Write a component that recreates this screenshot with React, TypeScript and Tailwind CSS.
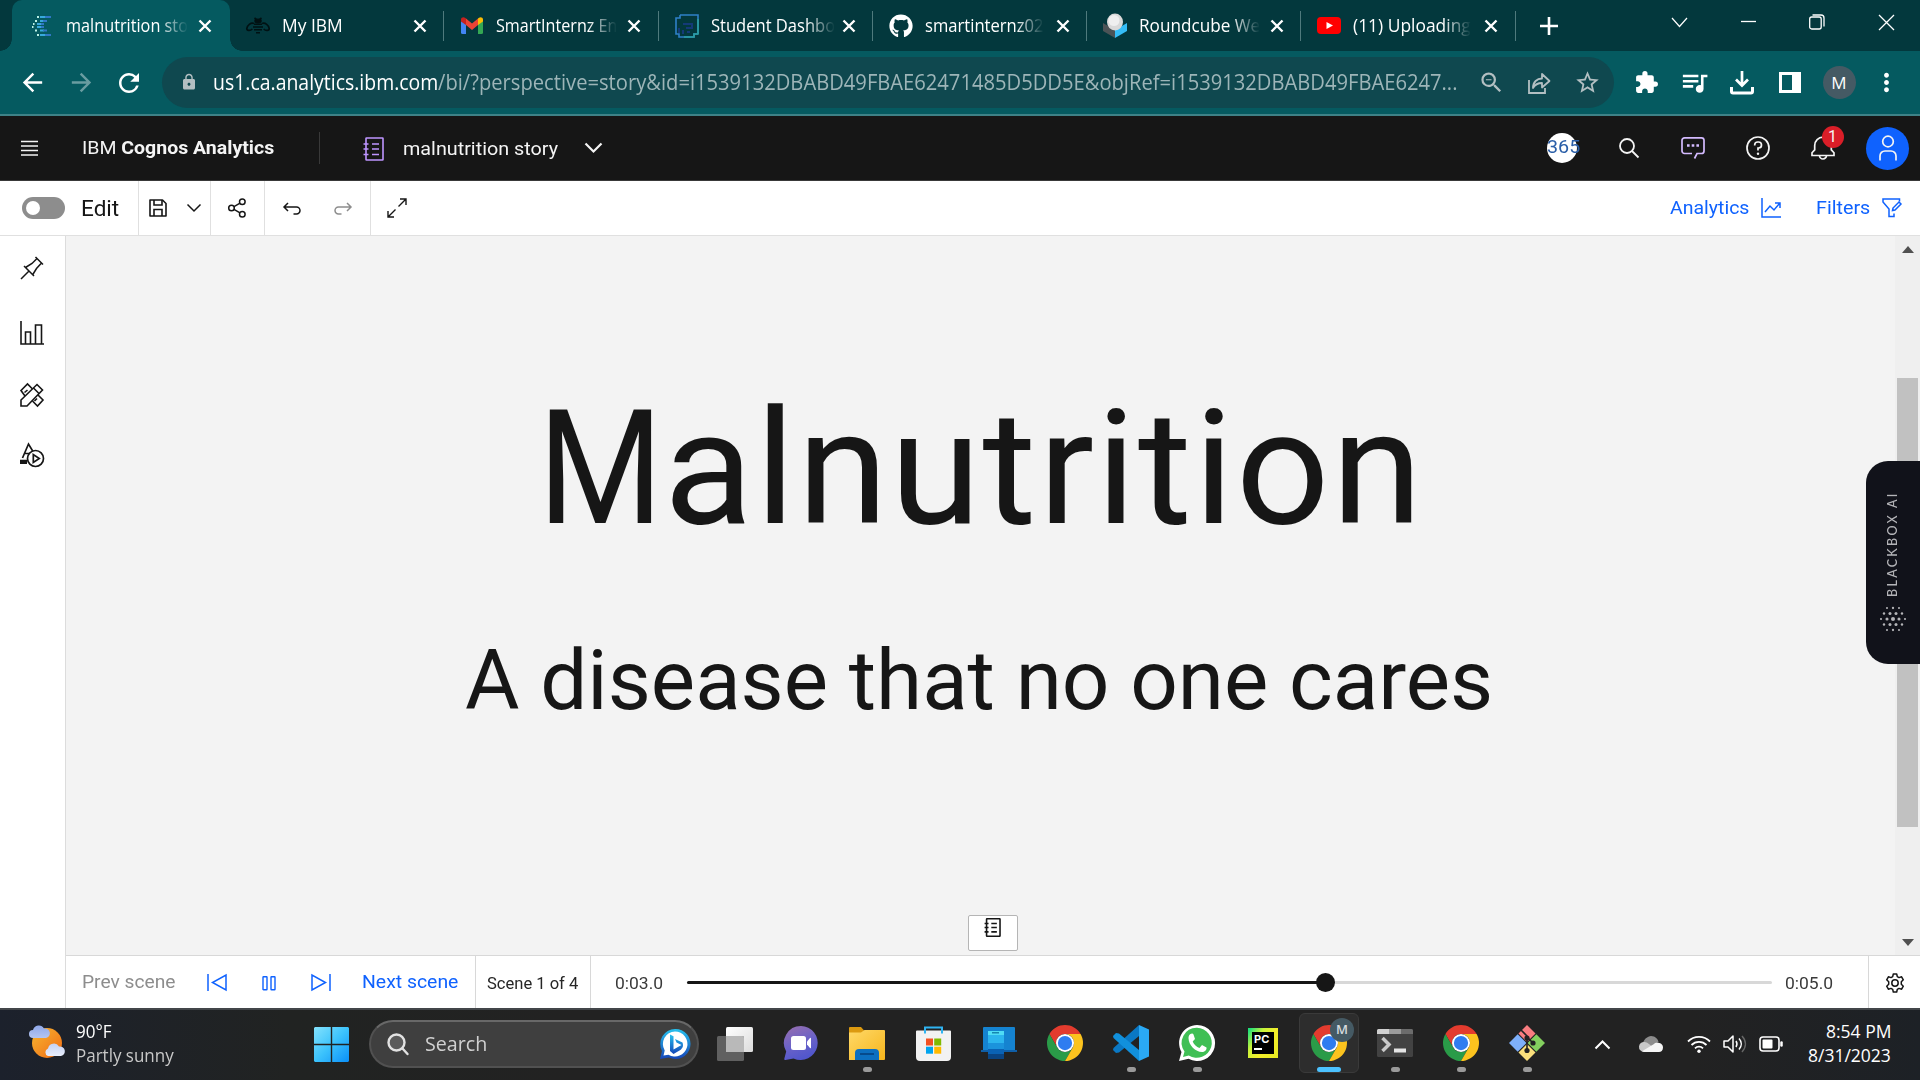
import { useLayoutEffect, useRef, useState, type ReactNode } from "react";
import { MdArrowBack, MdArrowForward, MdRefresh, MdLock, MdZoomOut, MdStarBorder, MdExtension, MdQueueMusic, MdMoreVert } from "react-icons/md";
import { FaGithub } from "react-icons/fa";

/** Single-line label that is condensed or expanded to fill its box exactly. */
function Label({ className = "", children }: { className?: string; children: ReactNode }) {
  const box = useRef<HTMLSpanElement>(null);
  const text = useRef<HTMLSpanElement>(null);
  const [scale, setScale] = useState(1);
  useLayoutEffect(() => {
    if (box.current && text.current) setScale(box.current.clientWidth / text.current.offsetWidth);
  }, []);
  return (
    <span ref={box} className={"block shrink-0 whitespace-nowrap " + className}>
      <span ref={text} className="inline-block origin-left" style={{ transform: `scaleX(${scale})` }}>
        {children}
      </span>
    </span>
  );
}

type SvgProps = { w?: number; h?: number; vb?: string; sw?: number; className?: string; children: ReactNode };
function Icon({ w = 20, h, vb, sw = 1.5, className = "", children }: SvgProps) {
  const hh = h ?? w;
  return (
    <svg width={w} height={hh} viewBox={vb ?? `0 0 ${w} ${hh}`} fill="none" stroke="currentColor" strokeWidth={sw} className={"shrink-0 overflow-visible " + className}>
      {children}
    </svg>
  );
}

function Cell({ className = "", children }: { className?: string; children?: ReactNode }) {
  return <div className={"flex shrink-0 items-center justify-center " + className}>{children}</div>;
}

/* ---------- Browser chrome ---------- */

function CloseX() {
  return (
    <Icon w={12} sw={2.4}><path d="M.5 .5l11 11M11.5 .5L.5 11.5" /></Icon>
  );
}

const cognosFav = (
  <Icon w={19} h={20} sw={1.8}>
    <g stroke="#38a9dc"><path d="M8 1h6M8 5h4M5 8h5M5 11h4M8 14.500h4M8 19h5" /></g>
    <path stroke="#2f78c4" d="M13 1h6M11 5h4M9 8h3M9 11h3M11 14.500h4M13 19h6" />
    <path stroke="#b9efe4" d="M5 1h2M3 5h2M1 8h1.500M0 11h1.500M3 14.500h2M5 19h2" />
  </Icon>
);
const beeFav = (
  <Icon w={24} h={16} sw={1.6}>
    <g stroke="#011113">
      <ellipse cx="12" cy="3" rx="3" ry="1.600" fill="#011113" />
      <path d="M8.500 0l2 1.500M15.500 0l-2 1.500M8 6.300h8M7 9h10M8 11.700h8M10 14.700h4" />
      <path strokeWidth="1.700" d="M8 5.500C5 4 1 7.500 .800 10.500c0 2.500 3.500 2.500 5.500.5M16 5.500c3-1.500 7 2 7.200 5 0 2.500-3.500 2.500-5.500.5" />
    </g>
  </Icon>
);
const gmailFav = (
  <Icon w={22} h={17} className="stroke-none">
    <path fill="#4285f4" d="M0 4v11.500A1.500 1.500 0 0 0 1.500 17H5V7z" />
    <path fill="#34a853" d="M22 4v11.500A1.500 1.500 0 0 1 20.500 17H17V7z" />
    <path fill="#ea4335" d="M5 1.500l6 5 6-5V8l-6 5L5 8z" />
    <path fill="#c5221f" d="M0 2.500C0 .3 2.500-.5 4 .7l1 .8V8L0 4.500z" />
    <path fill="#fbbc04" d="M22 2.500C22 .3 19.500-.5 18 .7l-1 .8V8l5-3.500z" />
  </Icon>
);
const studentFav = (
  <Icon w={24} h={24} sw={1.6}>
    <path stroke="#2f80c8" d="M5 1h18v19M5 1v3H1v16h3v3h15v-3h4" />
    <path stroke="#2aa0a0" d="M23 5v15h-4v3H9" />
    <path stroke="#143a78" strokeWidth="2" d="M8 10h9v4h-6M4 14v5M8 16v4M12 18h3" />
  </Icon>
);
const cubeFav = (
  <Icon w={24} h={24} className="stroke-none">
    <path fill="#4b5356" d="M0 9l12 7v8L0 17z" />
    <path fill="#35bdf7" d="M24 9l-12 7v8l12-7z" />
    <ellipse cx="12" cy="8" rx="8" ry="8.500" fill="#d9d9d9" />
    <ellipse cx="11" cy="6.500" rx="5.500" ry="5.500" fill="#efefef" />
  </Icon>
);
const ytFav = (
  <Icon w={24} h={17} className="stroke-none">
    <rect width="24" height="17" rx="4" fill="#f00" /><path fill="#fff" d="M9.500 5v7l6.500-3.500z" />
  </Icon>
);

const fade = "text-[18px] [mask-image:linear-gradient(to_right,black_76%,transparent)] ";

const tabs = [
  { title: "My IBM", icon: beeFav, w: "w-[61px] text-[18px]" },
  { title: "SmartInternz En", icon: gmailFav, w: fade + "w-[121px]" },
  { title: "Student Dashbo", icon: studentFav, w: fade + "w-[124px]" },
  { title: "smartinternz02", icon: <FaGithub size={24} />, w: fade + "w-[119px]" },
  { title: "Roundcube We", icon: cubeFav, w: fade + "w-[121px]" },
  { title: "(11) Uploading", icon: ytFav, w: fade + "w-[118px]" },
];

function TabStrip() {
  return (
    <div className="flex h-[51px] bg-[#03383d] pl-3 text-white">
      <div className="relative flex w-[218px] shrink-0 items-center rounded-t-[10px] bg-[#055a60] pl-[19px]">
        <div className="absolute -left-3 bottom-0 size-3 bg-[radial-gradient(circle_at_0_0,transparent_11.5px,#055a60_12px)]" />
        <div className="absolute -right-3 bottom-0 size-3 bg-[radial-gradient(circle_at_100%_0,transparent_11.5px,#055a60_12px)]" />
        <Cell className="w-5">{cognosFav}</Cell>
        <div className="ml-[15px] w-[121px]">
          <Label className="w-[122px] text-[18px] [mask-image:linear-gradient(to_right,black_76%,transparent)]">malnutrition sto</Label>
        </div>
        <Cell className="ml-[12px] w-[12px]"><CloseX /></Cell>
      </div>
      {tabs.map((t) => (
        <div key={t.title} className="flex w-[214.3px] shrink-0 items-center pl-[16px]">
          <Cell className="w-6">{t.icon}</Cell>
          <div className="ml-[12px] w-[120px]">
            <Label className={t.w}>{t.title}</Label>
          </div>
          <Cell className="ml-[12px] w-[12px]"><CloseX /></Cell>
          <div className="ml-auto mt-px h-[30px] w-px self-center bg-[#4f7a7d]" />
        </div>
      ))}
      <Cell className="w-[66px]"><Icon w={18} sw={2.6}><path d="M9 0v18M0 9h18" /></Icon></Cell>
      <div className="ml-[63px] flex h-[44px]">
        <Cell className="w-[69px]"><Icon w={15} h={9} sw={1.2}><path d="M0 0l7.500 8.500L15 0" /></Icon></Cell>
        <Cell className="w-[69px]"><Icon w={15} h={2} sw={1.3}><path d="M0 .5h15" /></Icon></Cell>
        <Cell className="w-[69px]"><Icon w={16} h={16} sw={1.3}><rect x=".7" y="3" width="11.500" height="12" rx="2" /><path d="M3.500 1h8.500a3 3 0 0 1 3 3v8.500" /></Icon></Cell>
        <Cell className="w-[69px]"><Icon w={15} sw={1.3}><path d="M0 0l15 15M15 0L0 15" /></Icon></Cell>
      </div>
    </div>
  );
}

function AddressBar() {
  return (
    <div className="flex h-[65px] items-center border-b-2 border-[#3e8287] bg-[#055a60] text-white">
      <Cell className="ml-2 w-[49px]"><MdArrowBack size={29} /></Cell>
      <Cell className="w-[48px] text-[#6a9da1]"><MdArrowForward size={29} /></Cell>
      <Cell className="w-[48px]"><MdRefresh size={30} /></Cell>
      <div className="ml-[9px] flex h-[51px] w-[1452px] shrink-0 items-center rounded-full bg-[#0f484f] text-[#b3bfc2]">
        <Cell className="ml-[17px] w-5 pb-px"><MdLock size={18} /></Cell>
        <Label className="ml-[14px] w-[225px] text-[21px] text-white">us1.ca.analytics.ibm.com</Label>
        <Label className="w-[1019px] text-[21px] text-[#9db5b8]">/bi/?perspective=story&amp;id=i1539132DBABD49FBAE62471485D5DD5E&amp;objRef=i1539132DBABD49FBAE6247...</Label>
        <Cell className="ml-[10px] w-12"><MdZoomOut size={27} /></Cell>
        <Cell className="w-12">
          <Icon w={23} h={22} sw={1.8}><path d="M1 8v13h16v-5" /><path strokeLinejoin="round" d="M5 16c0-6 4-9.500 9-9.500V2l7.500 7-7.500 6.500V11c-4 0-7 1.500-9 5z" /></Icon>
        </Cell>
        <Cell className="w-12"><MdStarBorder size={27} /></Cell>
      </div>
      <Cell className="ml-[8px] w-12"><MdExtension size={25} /></Cell>
      <Cell className="w-12"><MdQueueMusic size={31} /></Cell>
      <Cell className="w-12"><Icon w={24} h={24} sw={3}><path d="M12 0v13M6 8.500l6 6 6-6" strokeWidth="2.700" /><path d="M1.500 16v4.500a1.500 1.500 0 0 0 1.500 1.500h18a1.500 1.500 0 0 0 1.500-1.500V16" /></Icon></Cell>
      <Cell className="w-12"><Icon w={22} h={21} sw={3}><path d="M1.500 1.500h19v18h-19z" /><path fill="currentColor" stroke="none" d="M13 1h8v19h-8z" /></Icon></Cell>
      <Cell className="ml-px w-12"><div className="flex size-[33px] items-center justify-center rounded-full bg-[#455a64] text-[17px]">M</div></Cell>
      <Cell className="w-[47px]"><MdMoreVert size={29} /></Cell>
    </div>
  );
}

/* ---------- Cognos header ---------- */

function StoryIcon({ w, h, sw }: { w: number; h: number; sw: number }) {
  return (
    <Icon w={w} h={h} vb="0 0 20 24" sw={sw}>
      <rect x="2.500" y="1" width="17" height="22" rx=".5" />
      <path d="M0 7h5M0 12h5M0 17.500h5M8.500 7h7M8.500 12h7M8.500 17.500h7" />
    </Icon>
  );
}

function CognosHeader() {
  return (
    <div className="flex h-[65px] items-center border-b border-[#393939] bg-[#161616] font-[Roboto,sans-serif] text-[#f4f4f4]">
      <Cell className="ml-[21px] w-[17px]"><Icon w={17} h={15} sw={1.4}><path d="M0 .5h17M0 5h17M0 9.500h17M0 14h17" /></Icon></Cell>
      <Label className="ml-[44px] w-[192px] text-[19px]">IBM <b>Cognos Analytics</b></Label>
      <div className="ml-[45px] h-8 w-px bg-[#393939]" />
      <div className="ml-[43px] mt-[1px] text-[#be95ff]"><StoryIcon w={21} h={24} sw={1.6} /></div>
      <Label className="ml-[19px] mt-[2px] w-[155px] text-[19px]">malnutrition story</Label>
      <Cell className="ml-[26px] w-[18px]"><Icon w={17} h={10} sw={2.2}><path d="M.5 .5l8 8 8-8" /></Icon></Cell>
      <div className="ml-auto flex items-center">
        <div className="relative flex size-[30px] items-center rounded-full bg-white">
          <Label className="w-[33px] text-[18.500px] text-[#2b5fa8]">365</Label>
        </div>
        <Cell className="ml-[35px] w-[34px]"><Icon w={20} sw={1.8}><circle cx="8" cy="8" r="7" /><path d="M13 13l6.500 6.500" /></Icon></Cell>
        <Cell className="ml-[30px] w-[34px] text-[#d4bbff]">
          <Icon w={24} h={22} sw={1.700}><path d="M13.500 21.500l2.500-5h4.500a2.500 2.500 0 0 0 2.500-2.500V3.300A2.500 2.500 0 0 0 20.500.8h-17A2.500 2.500 0 0 0 1 3.300V14a2.500 2.500 0 0 0 2.500 2.500H11" /><path strokeWidth="2.600" d="M6 8.500h2.600M10.700 8.500h2.600M15.400 8.500H18" /></Icon>
        </Cell>
        <Cell className="ml-[30.500px] w-[34px]">
          <Icon w={24} sw={1.700}><circle cx="12" cy="12" r="11" /><path d="M8.700 9.500V9A3 3 0 0 1 11.700 6h.8a2.900 2.900 0 0 1 0 6H12v2.600" /><circle cx="12" cy="17.700" r="1.200" fill="currentColor" stroke="none" /></Icon>
        </Cell>
        <div className="relative ml-[31px] flex w-[34px] items-center justify-center">
          <Icon w={24} h={24} sw={1.700}><path d="M1 19.500v-2.700l2.700-3V9.500a8.300 8.300 0 0 1 16.600 0v4.300l2.700 3v2.700z" /><path d="M8.500 19.500a3.500 3.500 0 0 0 7 0" /></Icon>
          <div className="absolute -top-[10px] right-[-4px] flex size-[22px] items-center justify-center rounded-full bg-[#da1e28] text-[16px]">1</div>
        </div>
        <Cell className="ml-[26.500px] mr-[11px] size-[43px] rounded-full bg-[#0f62fe]">
          <Icon w={20} h={26} sw={1.700}><circle cx="10" cy="6.500" r="5.300" /><path d="M2 25.500v-4.500a5 5 0 0 1 5-5h6a5 5 0 0 1 5 5v4.500" /></Icon>
        </Cell>
      </div>
    </div>
  );
}

function Toolbar() {
  return (
    <div className="flex h-[55px] border-b border-[#e0e0e0] bg-white font-[Roboto,sans-serif] text-[#161616]">
      <div className="flex w-[139px] shrink-0 items-center border-r border-[#e0e0e0] pl-[22px]">
        <div className="flex h-[22px] w-[43px] items-center rounded-full bg-[#8d8d8d] pl-[4px]"><div className="size-[14px] rounded-full bg-white" /></div>
        <Label className="ml-[16px] mt-px w-[38px] text-[22px]">Edit</Label>
      </div>
      <div className="flex w-[72px] shrink-0 items-center border-r border-[#e0e0e0]">
        <Cell className="ml-[10px] w-[18px]"><Icon w={18} sw={1.600}><path d="M1 1h12.500L17 4.500V17H1z" strokeLinejoin="round" /><path d="M5 1v5h8V1M5 17v-6.500h8V17" /></Icon></Cell>
        <Cell className="ml-[19px] w-[15px]"><Icon w={14} h={8} sw={1.500}><path d="M.5 .5L7 7l6.500-6.500" /></Icon></Cell>
      </div>
      <Cell className="w-[54px] border-r border-[#e0e0e0] pr-px">
        <Icon w={18} h={20} sw={1.500}><circle cx="3.500" cy="10" r="2.800" /><circle cx="14.300" cy="3.800" r="2.800" /><circle cx="14.300" cy="16.200" r="2.800" /><path d="M6 8.700l6-3.500M6 11.300l6 3.500" /></Icon>
      </Cell>
      <div className="flex w-[106px] shrink-0 items-center border-r border-[#e0e0e0]">
        <Cell className="w-[53px]"><Icon w={18} h={13} sw={1.500}><path d="M5 1L1 5l4 4M1 5h12.500a3.500 3.500 0 0 1 0 7H10.500" /></Icon></Cell>
        <Cell className="w-[50px] text-[#8d8d8d]"><Icon w={18} h={13} sw={1.500}><path d="M13 1l4 4-4 4M17 5H4.500a3.500 3.500 0 0 0 0 7H7.500" /></Icon></Cell>
      </div>
      <Cell className="w-[52px]"><Icon w={20} h={20} sw={1.400}><path d="M13 1h6v6M1 13v6h6M19 1l-7.500 7.500M8.500 11.500L1 19" /></Icon></Cell>
      <div className="ml-auto flex items-center text-[#0f62fe]">
        <Label className="mt-px w-[79px] text-[19px]">Analytics</Label>
        <Icon w={20} className="ml-[12px]" sw={1.500}><path d="M1 0v19h19" /><path d="M4 14l5-6 4 4 5.500-6.500M14 5h5v5" /></Icon>
        <Label className="ml-[35px] mt-px w-[54px] text-[19px]">Filters</Label>
        <Icon w={20} className="ml-[12px] mr-[18px]" sw={1.500}><path d="M17.500 3.500V1H1v3l6 7v7.500h5v-3" /><path d="M10.500 12.500l.5-2.500 6-6 2 2-6 6z" /></Icon>
      </div>
    </div>
  );
}

function SideRail() {
  return (
    <div className="flex w-[66px] shrink-0 flex-col items-center border-r border-[#dcdcdc] bg-white pr-[2px] text-[#161616]">
      <Cell className="mt-[20px] h-6"><Icon w={24} sw={1.500}><path d="M15.500 1l7.500 7.500M17 2.500L12 7.500l-6.500 4M21.500 7l-5 5.500-4 6.500M4 10l10 10M9 15l-8 8" /></Icon></Cell>
      <Cell className="mt-[41px] h-6"><Icon w={24} sw={1.600}><path d="M1 0v23h23M5.500 23V11h5v12M15.500 23V4h6v19" /></Icon></Cell>
      <Cell className="mt-[38px] h-6">
        <Icon w={24} sw={1.600}><path d="M1 23v-6L17 1.500l5.500 5.500L7 23zM13.500 5l5.500 5.500" /><path d="M5 13L1 7.500 7.500 1l5 5M4.500 9.500l3-2.500M18 12l5 5-5.500 6-5-5M14.500 18l2.500-2.500" /></Icon>
      </Cell>
      <Cell className="mt-[36px] h-6">
        <Icon w={24} sw={1.700}><path d="M2.500 15L8.500 1l4.500 7.500M5 10.500h4M0 17.500h7" /><path strokeWidth="3" d="M0 19.500h7" /><circle cx="15.500" cy="15.500" r="8" /><path d="M13.300 11.500v8l6-4z" /></Icon>
      </Cell>
    </div>
  );
}

function BlackboxTab() {
  const rows: [number, number[]][] = [[-11, [-6, 0, 6]], [-5.5, [-9, -3, 3, 9]], [0, [-12, -6, 0, 6, 12]], [5.5, [-9, -3, 3, 9]], [11, [-6, 0, 6]]];
  return (
    <div className="absolute right-0 top-[225px] flex h-[203px] w-[54px] flex-col items-center rounded-l-[22px] bg-[#11121a] pt-[30px] text-[#b4b4b8]">
      <div className="flex h-[107px] w-5 rotate-180 items-center justify-center [writing-mode:vertical-rl]">
        <span className="whitespace-nowrap font-[Lato,sans-serif] text-[12.5px] font-medium tracking-[2.3px]">BLACKBOX AI</span>
      </div>
      <Icon w={28} className="mt-[7px] stroke-none" vb="-14 -14 28 28">
        {rows.flatMap(([y, xs]) => xs.map((x) => <circle key={x + "," + y} cx={x} cy={y} r={Math.max(1, 2 - Math.hypot(x, y) / 13)} fill="currentColor" />))}
      </Icon>
    </div>
  );
}

function Stage() {
  return (
    <div className="relative flex h-[719px] bg-[#f3f3f3] text-[#161616]">
      <div className="flex flex-1 flex-col items-center font-[Roboto,sans-serif]">
        <Label className="mt-[133px] w-[886px] pr-[2px] text-[160px] leading-[200px]">
          <span className="inline-block w-[0.765em] origin-left scale-x-[0.87]">M</span>
          <span className="tracking-[0.012em]">alnutrition</span>
        </Label>
        <Label className="mr-[4px] mt-[67px] w-[1028px] text-[83px] leading-[90px]">A disease that no one cares</Label>
        <div className="ml-[24px] mt-[189px] flex h-[36px] w-[50px] justify-center rounded-[2px] border border-[#b5b5b5] bg-white pt-[2px]">
          <StoryIcon w={17} h={19} sw={2} />
        </div>
      </div>
      <div className="flex w-[25px] shrink-0 flex-col items-center bg-[#efefef] pt-[10px]">
        <Icon w={12} h={7} className="fill-[#505050] stroke-none"><path d="M0 7l6-7 6 7z" /></Icon>
        <div className="mt-[125px] h-[449px] w-[21px] bg-[#c1c1c1]" />
        <Icon w={12} h={7} className="mt-[112px] fill-[#505050] stroke-none"><path d="M0 0h12L6 7z" /></Icon>
      </div>
      <BlackboxTab />
    </div>
  );
}

function PlayerBar() {
  return (
    <div className="flex h-[53px] border-t border-[#d8d8d8] bg-white font-[Roboto,sans-serif] text-[#393939]">
      <div className="flex w-[410px] shrink-0 items-center border-r border-[#d8d8d8] pl-[16px] pt-px text-[19px] text-[#0f62fe]">
        <Label className="w-[94px] text-[#8d8d8d]">Prev scene</Label>
        <Icon w={20} h={17} className="ml-[31px]" sw={1.500}><path d="M1 0v17M19 1v15L5.500 8.500z" /></Icon>
        <Icon w={14} h={14} className="ml-[35px]" sw={1.400}><rect x="1" y=".7" width="4" height="13" rx=".5" /><rect x="9" y=".7" width="4" height="13" rx=".5" /></Icon>
        <Icon w={20} h={17} className="ml-[35px]" sw={1.500}><path d="M19 0v17M1 1v15l13.500-7.500z" /></Icon>
        <Label className="ml-[31px] w-[96px]">Next scene</Label>
      </div>
      <div className="flex w-[115px] shrink-0 items-center border-r border-[#d8d8d8] pl-[11px] text-[16px]">
        <Label className="w-[91px] pt-[3px] text-[#262626]">Scene 1 of 4</Label>
      </div>
      <div className="flex flex-1 items-center pl-[24px] text-[16px]">
        <Label className="w-[48px] pt-[3px]">0:03.0</Label>
        <div className="relative ml-[24px] flex h-[3px] w-[1085px] items-center rounded-full bg-[#d8d8d8]">
          <div className="h-[3px] w-[638px] rounded-l-full bg-[#161616]" />
          <div className="absolute left-[629px] size-[19px] rounded-full bg-[#161616]" />
        </div>
        <Label className="ml-[13px] w-[48px] pt-[3px]">0:05.0</Label>
      </div>
      <Cell className="w-[52px] border-l border-[#d8d8d8] pt-px text-[#161616]">
        <Icon w={20} vb="0 0 20 20" sw={1.500}><circle cx="10" cy="10" r="3.200" /><path strokeLinejoin="round" d="M8.300 1h3.400l.6 2.600 1.700 1 2.600-.8 1.700 3-2 1.900v2.600l2 1.900-1.700 3-2.600-.8-1.700 1-.6 2.600H8.300l-.6-2.600-1.700-1-2.600.8-1.700-3 2-1.900V8.700l-2-1.900 1.700-3 2.600.8 1.700-1z" /></Icon>
      </Cell>
    </div>
  );
}

/* ---------- Taskbar ---------- */

function Chrome() {
  return (
    <Icon w={36} vb="0 0 48 48" className="stroke-none">
      <path fill="#e33b2e" d="M3.220 12A24 24 0 0 1 44.780 12H24A12 12 0 0 0 13.600 30z" />
      <path fill="#2a9b48" d="M3.220 12A24 24 0 0 0 24 48L34.400 30A12 12 0 0 1 13.600 30z" />
      <path fill="#fcc31e" d="M44.780 12A24 24 0 0 1 24 48L34.400 30A12 12 0 0 0 24 12z" />
      <circle cx="24" cy="24" r="12" fill="#fff" /><circle cx="24" cy="24" r="9.500" fill="#2f7cf0" />
    </Icon>
  );
}

function TaskButton({ running, active, children }: { running?: boolean; active?: boolean; children: ReactNode }) {
  return (
    <div className="relative flex h-[70px] w-[66px] shrink-0 items-center justify-center pb-[2px]">
      {active && <div className="absolute inset-x-[3px] bottom-[6px] top-[4px] rounded-md border border-[#3a3a3a] bg-[#2d2d2d]" />}
      <div className="relative">{children}</div>
      {active && <div className="absolute bottom-[7px] h-[5px] w-6 rounded-full bg-[#4cc2ff]" />}
      {running && <div className="absolute bottom-[7px] h-[5px] w-[9px] rounded-full bg-[#9a9a9a]" />}
    </div>
  );
}

function Taskbar() {
  return (
    <div className="flex h-[72px] items-center border-t-2 border-[#43464a] bg-[linear-gradient(to_right,#1c212c,#212322_15%,#222_30%,#222_88%,#1d2126)] pb-[2px] text-white">
      <Icon w={36} h={34} className="ml-[29px] -mt-1 stroke-none">
        <defs>
          <linearGradient id="sun" x1="0" y1="0" x2="1" y2="1"><stop offset="0" stopColor="#f7b731" /><stop offset="1" stopColor="#f06a14" /></linearGradient>
          <linearGradient id="cl" x1="0" y1="0" x2="0" y2="1"><stop offset="0" stopColor="#8fa8ea" /><stop offset="1" stopColor="#e8eefc" /></linearGradient>
        </defs>
        <circle cx="18" cy="18" r="15" fill="url(#sun)" />
        <path fill="url(#cl)" d="M4 13a4 4 0 0 1 0-8 6 6 0 0 1 11-1.500 4.500 4.500 0 0 1 2 9.500zM19 31a4 4 0 0 1 0-7.500 6 6 0 0 1 11-2 4.800 4.800 0 0 1 2 9.500z" />
      </Icon>
      <div className="ml-[11px] flex w-[98px] flex-col pb-[2px] text-[17.500px] leading-6">
        <Label className="w-[36px]">90°F</Label>
        <Label className="w-[98px] text-[#c8c8c8]">Partly sunny</Label>
      </div>
      <Icon w={35} className="ml-[140px] stroke-none">
        <defs><linearGradient id="win" x1="0" y1="0" x2="1" y2="1"><stop offset="0" stopColor="#84e2fd" /><stop offset=".5" stopColor="#3cc3fc" /><stop offset="1" stopColor="#0a8ff8" /></linearGradient></defs>
        <path fill="url(#win)" d="M1 0h15.800v16.800H0V1zM18.200 0H34l1 1v15.800H18.200zM0 18.200h16.800V35H1l-1-1zM18.200 18.200H35V34l-1 1H18.200z" />
      </Icon>
      <div className="ml-[20px] flex h-12 w-[330px] shrink-0 items-center rounded-full border-2 border-[#515151] border-t-[#686868] bg-[#3f3f3f]">
        <Icon w={22} h={22} className="ml-[16px] -mt-px text-[#e2e2e2]" sw={2.400}><circle cx="9.500" cy="9.500" r="8" fill="#5a5a5a" /><path strokeLinecap="round" d="M15.500 15.500l5 5.500" /></Icon>
        <Label className="ml-[16px] w-[62px] text-[20px] text-[#d0d0d0]">Search</Label>
        <Icon w={30} className="ml-auto mr-[7px] stroke-none">
          <defs><linearGradient id="bing" x1="0" y1="0" x2="0" y2="1"><stop offset="0" stopColor="#27c1ee" /><stop offset="1" stopColor="#1546b8" /></linearGradient></defs>
          <path fill="url(#bing)" d="M15 0a15 15 0 1 1-6 28.500L0 30l2-8A15 15 0 0 1 15 0z" />
          <path fill="#fff" d="M15 2.500a12.500 12.500 0 1 1-6.500 23.200L3.500 26.500l1.200-5A12.500 12.500 0 0 1 15 2.500z" />
          <path fill="url(#bing)" d="M10 5.500l3.500 1.700v13.300l8-4.500-5-2.500-1.500-3.500 7.500 3.500c1.500 4-.5 6.500-3 8L13.500 25 10 22z" />
        </Icon>
      </div>
      <div className="ml-[3px] flex">
        <TaskButton>
          <Icon w={36} h={35} className="stroke-none">
            <defs><linearGradient id="tv" x1="0" y1="0" x2="1" y2="1"><stop offset="0" stopColor="#fff" /><stop offset="1" stopColor="#dcdcdc" /></linearGradient></defs>
            <rect x="9" y="1" width="27" height="25" rx="1.500" fill="url(#tv)" /><rect y="10" width="27" height="25" rx="1.500" fill="#606060" /><path fill="#b9b9b9" d="M9 10h16.500a1.500 1.500 0 0 1 1.500 1.500V26H9z" />
          </Icon>
        </TaskButton>
        <TaskButton>
          <Icon w={34} h={34} className="stroke-none">
            <defs><linearGradient id="teams" x1="0" y1="0" x2=".4" y2="1"><stop offset="0" stopColor="#9a6fae" /><stop offset=".6" stopColor="#6a62c8" /><stop offset="1" stopColor="#5257cc" /></linearGradient></defs>
            <path fill="url(#teams)" d="M17 0a17 17 0 1 1-7.500 32.400L1.500 34a1 1 0 0 1-1.200-1.300L2.200 25.500A17 17 0 0 1 17 0z" />
            <rect x="7" y="10" width="15" height="14" rx="2.500" fill="#fff" /><path fill="#fff" d="M23 15.500l3-3.500q1-.6 1 .5v9q0 1.100-1 .5l-3-3.500z" />
          </Icon>
        </TaskButton>
        <TaskButton running>
          <Icon w={36} h={33} className="stroke-none">
            <defs><linearGradient id="fold" x1="0" y1="0" x2="1" y2="1"><stop offset="0" stopColor="#ffd968" /><stop offset="1" stopColor="#f6b51c" /></linearGradient></defs>
            <path fill="#dc9a10" d="M0 1a1 1 0 0 1 1-1h11l3.500 4H35v10H0z" /><path fill="url(#fold)" d="M0 5.500h12l3.500-2.500H35a1 1 0 0 1 1 1V32a1 1 0 0 1-1 1H0z" />
            <path fill="#0c6fc0" d="M6 33V26a4 4 0 0 1 4-4h16a4 4 0 0 1 4 4v7z" /><path fill="#064a8c" d="M11 26h14v2H11z" />
          </Icon>
        </TaskButton>
        <TaskButton>
          <Icon w={35} h={35} className="stroke-none">
            <path fill="none" stroke="#2fb4f2" strokeWidth="2" d="M9 7V1.500h17V7" />
            <path fill="#f2f2f2" d="M1 4.500h33a1 1 0 0 1 1 1v25.500a4 4 0 0 1-4 4H4a4 4 0 0 1-4-4V5.500a1 1 0 0 1 1-1z" />
            <path fill="none" stroke="#2fb4f2" strokeWidth="2" d="M9 4v3.500M26 4v3.500" />
            <path fill="#f25022" d="M10 12.500h7v7h-7z" /><path fill="#7fba00" d="M18.200 12.500h7v7h-7z" /><path fill="#00a4ef" d="M10 20.700h7v7h-7z" /><path fill="#ffb900" d="M18.200 20.700h7v7h-7z" />
          </Icon>
        </TaskButton>
        <TaskButton>
          <Icon w={36} h={32} className="stroke-none">
            <path fill="#1583d0" d="M2 1a1 1 0 0 1 1-1h30a1 1 0 0 1 1 1v23H2z" /><path fill="#0f5fa8" d="M0 23h36v2H0z" />
            <rect x="7" y="4" width="16" height="28" rx="1" fill="#2cb5ee" /><path fill="#4fdcf5" d="M7 4h16v4H7z" /><path fill="#1b93dc" d="M7 16h16v8H7z" /><path fill="#0a62b4" d="M7 22h16v5H7z" /><path fill="#0a4482" d="M7 27h16v5H7z" /><path fill="#1787b0" d="M11 5h7v1.500h-7z" />
          </Icon>
        </TaskButton>
        <TaskButton><Chrome /></TaskButton>
        <TaskButton running>
          <Icon w={36} className="stroke-none">
            <path fill="#0a78c4" d="M26 0v11L6 27.500l-3 .5-3-3 .5-2z" /><path fill="#1190dc" d="M26 36V25L6 8.500l-3-.5-3 3 .5 2z" /><path fill="#2aa9f5" d="M26 0l10 4.500v27L26 36z" />
          </Icon>
        </TaskButton>
        <TaskButton running>
          <Icon w={36} className="stroke-none">
            <path fill="#fff" d="M18 0a18 18 0 1 1-8.500 33.800L0 36l2.500-9A18 18 0 0 1 18 0z" /><path fill="#3fbf54" d="M18 2.800A15 15 0 0 0 5.500 26.500L4 32l5.800-1.500A15 15 0 1 0 18 2.800z" />
            <path fill="#fff" transform="translate(6 5.500)" d="M8.500 4c-.5-1-1-1-1.500-1-2.500.3-3.500 2.500-3.500 4.500 0 7 7 14 13.500 14 2.500 0 5-2 4.500-4.500L17 14.500l-2.500 3c-3-1-5.500-3.500-6.800-6.500l2.300-2.500z" />
          </Icon>
        </TaskButton>
        <TaskButton>
          <div className="flex size-[30px] items-center justify-center bg-[linear-gradient(125deg,#21e07a_5%,#c9f23a_32%,#f4ee2a_60%,#e6ea22)]">
            <div className="flex size-[22px] flex-col bg-black pl-[2px] pt-px font-[Inter,sans-serif] text-[11px] font-bold leading-[12px]">PC<div className="mt-[3px] h-[2px] w-[8px] bg-white" /></div>
          </div>
        </TaskButton>
        <TaskButton active>
          <Chrome />
          <div className="absolute left-[19px] top-[-7px] flex size-6 items-center justify-center rounded-full bg-[#455a64] text-[13px] font-semibold text-[#d5dbde]">M</div>
        </TaskButton>
        <TaskButton running>
          <Icon w={36} h={28} className="stroke-none">
            <rect width="36" height="28" rx="1.500" fill="#424242" /><path fill="#d0d0d0" d="M0 1.500A1.500 1.500 0 0 1 1.500 0H12v5H0z" /><path fill="#9b9b9b" d="M12 0h12v5H12z" /><path fill="#6c6c6c" d="M24 0h10.500A1.500 1.500 0 0 1 36 1.500V5H24z" />
            <path fill="none" stroke="#c8c8c8" strokeWidth="3.500" d="M5.500 9l6.500 6.500-6.500 6.500" /><path fill="#e4e4e4" d="M17 19.500h12v4H17z" />
          </Icon>
        </TaskButton>
        <TaskButton running><Chrome /></TaskButton>
        <TaskButton running>
          <Icon w={36} className="stroke-none">
            <path fill="#f97d80" d="M18 0l8.500 8.500L18 17 9.500 8.500z" /><path fill="#7eb0fb" d="M8.700 9.300L17.400 18l-8.700 8.700L0 18z" /><path fill="#84d05f" d="M27.300 9.300L36 18l-8.700 8.700L18.600 18z" /><path fill="#fbe07c" d="M18 19l8.500 8.500L18 36l-8.500-8.500z" />
            <g stroke="#222" strokeWidth="1.600"><path d="M12 5l6 6v15M18 12l6 6" /></g><circle cx="18" cy="13" r="2.600" fill="#222" /><circle cx="18" cy="25.500" r="2.600" fill="#222" /><circle cx="24" cy="18" r="2.600" fill="#222" />
          </Icon>
        </TaskButton>
      </div>
      <Icon w={15} h={9} className="ml-[35px]" sw={2}><path d="M.5 8.500l7-7 7 7" /></Icon>
      <Icon w={24} h={16} className="ml-[29px] stroke-none"><path fill="#8c8c8c" d="M4 11C3 6 6 1 12 0c4 0 7 3 7.500 6L10 12z" /><path fill="#c9c9c9" d="M0 10.500A5 5 0 0 1 5.500 6c3 0 5 3 9 5l-3 5H5a5 5 0 0 1-5-5.500z" /><path fill="#f5f5f5" d="M3 15.200L15 8c1-2 9-2 9 3.500 0 3-2 4.500-4 4.500H5z" /></Icon>
      <Icon w={24} h={18} className="ml-[24px]" sw={1.800}><path d="M1 6.500a15.500 15.500 0 0 1 22 0M4.500 10a10.500 10.500 0 0 1 15 0M8 13.300a5.700 5.700 0 0 1 8 0" /><circle cx="12" cy="16.300" r="1.700" fill="currentColor" stroke="none" /></Icon>
      <Icon w={23} h={20} className="ml-[12px]" sw={1.500}><path strokeLinejoin="round" d="M1 7h4l5-5v16l-5-5H1z" /><path d="M13 7c1.300 2 1.300 4 0 6M16 4.500c3 3.300 3 7.700 0 11" /><path stroke="#666" d="M19 2c4.500 5 4.500 11 0 16" /></Icon>
      <Icon w={24} h={16} className="ml-[13px]" sw={1.600}><rect x="1" y="1" width="19" height="14" rx="3" /><rect x="3.500" y="3.500" width="10" height="9" rx="1" fill="currentColor" stroke="none" /><path strokeWidth="2.500" strokeLinecap="round" d="M22.500 6.500v3" /></Icon>
      <div className="ml-auto mr-[29px] flex flex-col items-end pb-[2px] text-[17.500px] leading-6">
        <Label className="w-[65px]">8:54 PM</Label>
        <Label className="w-[83px]">8/31/2023</Label>
      </div>
    </div>
  );
}

export default function App() {
  return (
    <div className="flex h-[1080px] w-[1920px] flex-col overflow-hidden bg-white font-['Open_Sans',sans-serif]">
      <TabStrip />
      <AddressBar />
      <CognosHeader />
      <Toolbar />
      <div className="flex h-[772px]">
        <SideRail />
        <div className="flex min-w-0 flex-1 flex-col">
          <Stage />
          <PlayerBar />
        </div>
      </div>
      <Taskbar />
    </div>
  );
}
